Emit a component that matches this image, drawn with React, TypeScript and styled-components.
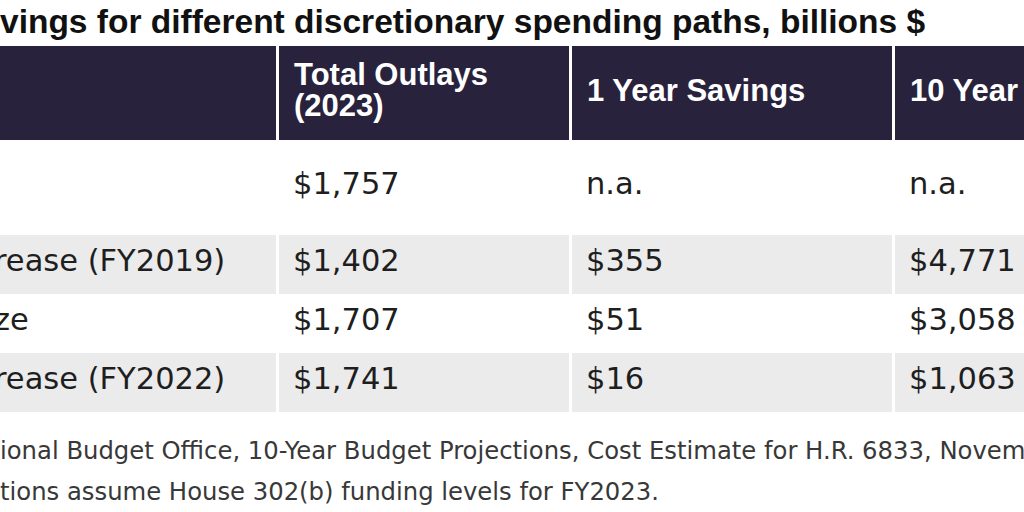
import React from 'react';
import styled, { createGlobalStyle } from 'styled-components';

const HEAD_BG = '#28223d';
const STRIPE_BG = '#ebebeb';
const COLUMNS = '276px 290px 320px 320px';

const columns = ['', 'Total Outlays\n(2023)', '1 Year Savings', '10 Year Savings'];

const rows = [
  { label: '', total: '$1,757', one: 'n.a.', ten: 'n.a.', tall: true },
  { label: 'rease (FY2019)', total: '$1,402', one: '$355', ten: '$4,771' },
  { label: 'ze', total: '$1,707', one: '$51', ten: '$3,058' },
  { label: 'rease (FY2022)', total: '$1,741', one: '$16', ten: '$1,063' },
];

const GlobalStyle = createGlobalStyle`
  html, body {
    margin: 0;
    padding: 0;
    background: #fff;
  }
  body {
    width: 1024px;
    height: 512px;
    overflow: hidden;
  }
`;

const Frame = styled.div`
  width: 1024px;
  height: 512px;
  overflow: hidden;
  background: #fff;
`;

const Title = styled.h2`
  margin: 0 0 4px;
  padding-top: 2px;
  font-family: 'Liberation Sans', Arial, sans-serif;
  font-weight: 700;
  font-size: 33.5px;
  line-height: 40px;
  color: #111;
  white-space: nowrap;
`;

const Row = styled.div<{ $height: number; $bg: string }>`
  display: grid;
  grid-template-columns: ${COLUMNS};
  column-gap: 3px;
  height: ${(p) => p.$height}px;

  & > * {
    background: ${(p) => p.$bg};
  }
`;

const HeadCell = styled.div`
  display: flex;
  align-items: center;
  padding: 0 15px 6px;
  font-family: 'Liberation Sans', Arial, sans-serif;
  font-weight: 700;
  font-size: 31px;
  line-height: 31px;
  color: #fff;
  white-space: pre-line;
`;

const Cell = styled.div<{ $label?: boolean }>`
  display: flex;
  align-items: center;
  padding: 0 14px 8px;
  padding-left: ${(p) => (p.$label ? '0' : '14px')};
  text-indent: ${(p) => (p.$label ? '-6px' : '0')};
  font-family: 'DejaVu Sans', 'Liberation Sans', sans-serif;
  font-size: 30.5px;
  line-height: 36px;
  color: #1e1e1e;
  white-space: nowrap;
  overflow: hidden;
`;

const Notes = styled.div`
  margin-top: 18px;
  font-family: 'DejaVu Sans', 'Liberation Sans', sans-serif;
  font-size: 24.3px;
  line-height: 41px;
  color: #383838;
  white-space: nowrap;
`;

const NoteLine = styled.p`
  margin: 0;
`;

export default function App() {
  return (
    <Frame>
      <GlobalStyle />
      <Title>vings for different discretionary spending paths, billions $</Title>
      <Row $height={94} $bg={HEAD_BG}>
        {columns.map((c, i) => (
          <HeadCell key={i}>{c}</HeadCell>
        ))}
      </Row>
      {rows.map((r, i) => (
        <Row key={i} $height={r.tall ? 95 : 59} $bg={i % 2 === 1 ? STRIPE_BG : '#fff'}>
          <Cell $label>{r.label}</Cell>
          <Cell>{r.total}</Cell>
          <Cell>{r.one}</Cell>
          <Cell>{r.ten}</Cell>
        </Row>
      ))}
      <Notes>
        <NoteLine>ional Budget Office, 10-Year Budget Projections, Cost Estimate for H.R. 6833, November 2022.</NoteLine>
        <NoteLine>tions assume House 302(b) funding levels for FY2023.</NoteLine>
      </Notes>
    </Frame>
  );
}
